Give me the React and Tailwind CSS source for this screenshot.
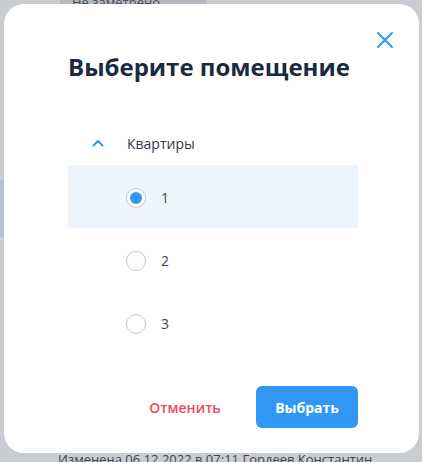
import React, { useState } from "react";

const rooms = ["1", "2", "3"];

const App = () => {
  const [selected, setSelected] = useState("1");
  const [open, setOpen] = useState(true);

  return (
    <div
      className="relative h-[462px] w-[422px] overflow-hidden bg-[#c9cdd1]"
      style={{ fontFamily: '"Open Sans", "Noto Sans", sans-serif' }}
    >
      {/* page behind the overlay */}
      <div className="ml-[60px] flex h-[4px] w-[146px] items-end overflow-hidden bg-[#b3b9bf] pl-[12px]">
        <span className="text-[13px] leading-[4px] text-[#4a4f55]">Не заметрено</span>
      </div>
      <div className="mt-[176px] h-[57px] w-[4px] bg-[#b8c1cd]" />
      <div className="absolute bottom-[-7px] left-[58px] text-[13px] text-[#3f444a]">
        Изменена 06.12.2022 в 07:11 Гордеев Константин
      </div>

      {/* modal */}
      <div className="absolute left-[4px] top-[4px] h-[449px] w-[415px] rounded-[20px] bg-white pl-[64px] pr-[61px] pt-[47px]">
        <button className="absolute right-[25px] top-[27px] text-[#3197f4]">
          <svg width="18" height="18" viewBox="0 0 18 18" fill="none" stroke="currentColor" strokeWidth="2" strokeLinecap="round">
            <path d="M2 2L16 16M16 2L2 16" />
          </svg>
        </button>

        <h2 className="text-[24px] font-bold leading-[32px] text-[#1b2a40]">Выберите помещение</h2>

        <div className="mt-[39px]">
          <button
            onClick={() => setOpen(!open)}
            className="flex h-[43px] items-center pl-[24px] text-[14px] text-[#2f3a48]"
          >
            <svg width="12" height="8" viewBox="0 0 12 8" fill="none" stroke="#3197f4" strokeWidth="2" strokeLinecap="round" strokeLinejoin="round" className="mb-[2px]">
              <path d="M1.5 6.5L6 2L10.5 6.5" />
            </svg>
            <span className="ml-[23px]">Квартиры</span>
          </button>

          {open &&
            rooms.map((r) => (
              <label
                key={r}
                onClick={() => setSelected(r)}
                className={`flex h-[63px] cursor-pointer items-center pl-[58px] pt-[2px] ${selected === r ? "bg-[#edf4fb]" : ""}`}
              >
                <span className="flex h-[20px] w-[20px] items-center justify-center rounded-full border border-[#c3c8ce] bg-white">
                  {selected === r && <span className="h-[12px] w-[12px] rounded-full bg-[#3197f4]" />}
                </span>
                <span className="ml-[15px] text-[14px] text-[#3b4656]">{r}</span>
              </label>
            ))}
        </div>

        <div className="mt-[32px] flex justify-end gap-[20px]">
          <button className="h-[42px] w-[102px] text-[14px] font-semibold text-[#f0495a]">Отменить</button>
          <button className="h-[42px] w-[102px] rounded-[6px] bg-[#3197f4] text-[14px] font-bold text-white">Выбрать</button>
        </div>
      </div>
    </div>
  );
};

export default App;
